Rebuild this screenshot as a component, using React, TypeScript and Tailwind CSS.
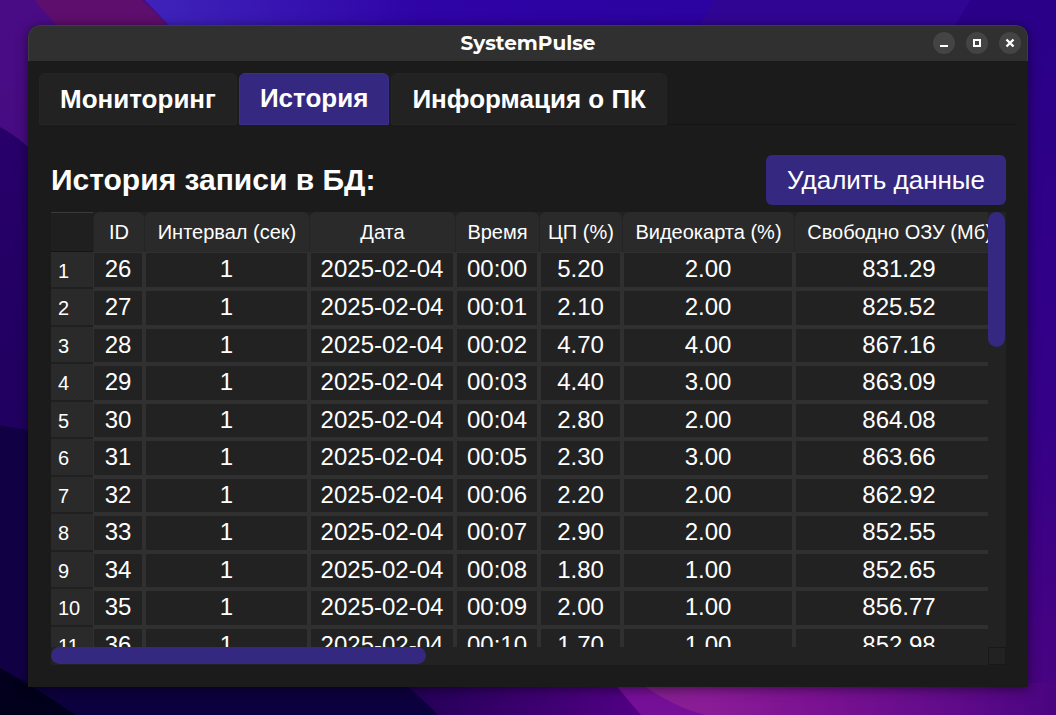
const columns = ["ID", "Интервал (сек)", "Дата", "Время", "ЦП (%)", "Видеокарта (%)", "Свободно ОЗУ (Мб)"];

const rows = [
  ["26", "1", "2025-02-04", "00:00", "5.20", "2.00", "831.29"],
  ["27", "1", "2025-02-04", "00:01", "2.10", "2.00", "825.52"],
  ["28", "1", "2025-02-04", "00:02", "4.70", "4.00", "867.16"],
  ["29", "1", "2025-02-04", "00:03", "4.40", "3.00", "863.09"],
  ["30", "1", "2025-02-04", "00:04", "2.80", "2.00", "864.08"],
  ["31", "1", "2025-02-04", "00:05", "2.30", "3.00", "863.66"],
  ["32", "1", "2025-02-04", "00:06", "2.20", "2.00", "862.92"],
  ["33", "1", "2025-02-04", "00:07", "2.90", "2.00", "852.55"],
  ["34", "1", "2025-02-04", "00:08", "1.80", "1.00", "852.65"],
  ["35", "1", "2025-02-04", "00:09", "2.00", "1.00", "856.77"],
  ["36", "1", "2025-02-04", "00:10", "1.70", "1.00", "852.98"],
];

function Wallpaper() {
  return (
    <svg className="absolute inset-0 size-full" viewBox="0 0 1056 715" preserveAspectRatio="none" aria-hidden="true">
      <defs>
        <linearGradient id="base" x1="0" y1="0" x2="1" y2="0">
          <stop offset="0" stopColor="#3f28c0" />
          <stop offset="0.17" stopColor="#3d20b8" />
          <stop offset="0.4" stopColor="#2f03a6" />
          <stop offset="0.65" stopColor="#2c02a0" />
        </linearGradient>
        <linearGradient id="left" x1="0" y1="0" x2="0" y2="1">
          <stop offset="0" stopColor="#4a0c86" />
          <stop offset="1" stopColor="#3f0a78" />
        </linearGradient>
        <linearGradient id="leftLow" x1="0" y1="0" x2="0" y2="1">
          <stop offset="0" stopColor="#28006a" />
          <stop offset="1" stopColor="#200060" />
        </linearGradient>
        <linearGradient id="bottom" gradientUnits="userSpaceOnUse" x1="400" y1="0" x2="640" y2="0">
          <stop offset="0" stopColor="#220055" />
          <stop offset="1" stopColor="#520085" />
        </linearGradient>
        <linearGradient id="petal" gradientUnits="userSpaceOnUse" x1="645" y1="0" x2="1056" y2="0">
          <stop offset="0" stopColor="#85208f" />
          <stop offset="0.15" stopColor="#8a1c97" />
          <stop offset="0.4" stopColor="#7c1292" />
          <stop offset="0.7" stopColor="#640c8c" />
          <stop offset="1" stopColor="#4a0480" />
        </linearGradient>
        <linearGradient id="right" x1="0" y1="0" x2="0" y2="1">
          <stop offset="0" stopColor="#2a0088" />
          <stop offset="0.6" stopColor="#350088" />
          <stop offset="1" stopColor="#4a0480" />
        </linearGradient>
      </defs>
      <rect width="1056" height="715" fill="url(#base)" />
      <path d="M714 0H1056V60H680Z" fill="#310594" />
      <path d="M970 0H1056V715H900V120Z" fill="url(#right)" />
      <path d="M0 0H145L230 90V400H0Z" fill="url(#left)" />
      <path d="M35 0H141Q155 11 168 27V50H90Q55 28 35 0Z" fill="#5e0e6c" />
      <path d="M0 127Q18 136 40 158V440H0Z" fill="url(#leftLow)" />
      <path d="M0 425Q20 430 40 431V715H0Z" fill="#120045" />
      <path d="M0 680H440V715H0Z" fill="#0d003e" />
      <path d="M0 668Q40 690 75 715H0Z" fill="#02001c" />
      <path d="M400 680H1000V715H438Q424 700 400 680Z" fill="url(#bottom)" />
      <path d="M614 683H1000V715H641Q628 700 614 683Z" fill="#760f98" />
      <path d="M640 683H1056V715H706Q675 708 640 683Z" fill="url(#petal)" />
    </svg>
  );
}

export default function App() {
  return (
    <div className="relative flex h-screen overflow-hidden bg-[#2a0088] px-7 pt-[25px] pb-7 font-['Liberation_Sans',Arial,sans-serif] text-white">
      <Wallpaper />
      <main className="relative flex min-w-0 flex-1 flex-col overflow-hidden rounded-t-xl bg-[#1b1b1b] shadow-[0_2px_12px_rgba(0,0,0,0.5)]">
        <header className="grid h-9 shrink-0 grid-cols-[1fr_auto_1fr] items-center rounded-t-xl border border-b-0 border-[#3d3d3d] bg-[#303030] px-1.5">
          <h1 className="col-start-2 pb-0.5 font-['Montserrat','Inter',sans-serif] text-xl leading-6 font-bold">SystemPulse</h1>
          <div className="flex justify-end gap-[11px] pb-px">
            <button aria-label="Свернуть" className="size-[22px] rounded-full bg-[#444444]">
              <svg viewBox="0 0 22 22" aria-hidden="true"><path d="M7 13h8v2H7z" fill="white" /></svg>
            </button>
            <button aria-label="Развернуть" className="size-[22px] rounded-full bg-[#444444]">
              <svg viewBox="0 0 22 22" aria-hidden="true"><path d="M8 8h6v6H8z" fill="none" stroke="white" strokeWidth="2" /></svg>
            </button>
            <button aria-label="Закрыть" className="size-[22px] rounded-full bg-[#444444]">
              <svg viewBox="0 0 22 22" aria-hidden="true"><path d="M7.5 7.5l7 7M14.5 7.5l-7 7" stroke="white" strokeWidth="2.4" /></svg>
            </button>
          </div>
        </header>

        <nav className="mx-[11px] mt-3 flex h-[52px] shrink-0 gap-0.5 border-b border-[#151515] text-[26px] leading-8 font-bold" role="tablist">
          <button role="tab" aria-selected="false" className="-mb-px rounded-t-md border border-[#252525] bg-[#222222] px-5">Мониторинг</button>
          <button role="tab" aria-selected="true" className="-mb-px rounded-t-md border border-[#3b2e88] bg-[#352880] px-5 pb-0.5">История</button>
          <button role="tab" aria-selected="false" className="-mb-px rounded-t-md border border-[#252525] bg-[#222222] px-5">Информация о ПК</button>
        </nav>

        <section className="flex min-h-0 flex-1 flex-col px-[22px] pt-[30px] pb-[22px] pl-[23px]">
          <div className="flex shrink-0 items-center justify-between">
            <h2 className="text-[30px] leading-9 font-bold">История записи в БД:</h2>
            <button className="h-[50px] rounded-md bg-[#352880] px-[21px] text-[26px] leading-8">Удалить данные</button>
          </div>

          <div className="mt-[7px] grid min-h-0 flex-1 grid-cols-[minmax(0,1fr)_18px] grid-rows-[minmax(0,1fr)_18px] bg-[#222222]">
            <div className="overflow-hidden">
              <table className="w-[953px] table-fixed border-separate border-spacing-0">
                <colgroup>
                  <col className="w-[42px]" />
                  <col className="w-[51px]" />
                  <col className="w-[165px]" />
                  <col className="w-[146px]" />
                  <col className="w-[84px]" />
                  <col className="w-[83px]" />
                  <col className="w-[172px]" />
                  <col className="w-[210px]" />
                </colgroup>
                <thead>
                  <tr className="h-10 bg-[#1b1b1b] text-xl leading-6">
                    <td className="border-t border-b border-t-[#3a3a3a] border-b-[#151515] bg-[#1f1f1f] p-0" />
                    {columns.map((name) => (
                      <th key={name} scope="col" className="rounded-t-md border-l border-[#242424] bg-[#2a2a2a] p-0 font-normal whitespace-nowrap">
                        {name}
                      </th>
                    ))}
                  </tr>
                </thead>
                <tbody>
                  {rows.map((row, index) => (
                    <tr key={row[0]} className="odd:h-[37px] even:h-[38px]">
                      <th scope="row" className="border-b-2 border-[#202020] bg-[#2a2a2a] p-0 pt-0.5 pl-[7px] text-left text-xl leading-6 font-normal">
                        {index + 1}
                      </th>
                      {row.map((value, cell) => (
                        <td
                          key={columns[cell]}
                          className={`border-r-2 border-b-2 border-[#303030] bg-[#222222] p-0 pb-0.5 text-center text-2xl leading-7 ${index === 0 ? "border-t" : "border-t-2"} ${cell === 0 ? "border-l" : "border-l-2"}`}
                        >
                          {value}
                        </td>
                      ))}
                    </tr>
                  ))}
                </tbody>
              </table>
            </div>
            <div>
              <div className="h-[135px] w-[17px] rounded-full bg-[#352880]" />
            </div>
            <div>
              <div className="h-[17px] w-2/5 rounded-full bg-[#352880]" />
            </div>
            <div className="border border-[#181818]" />
          </div>
        </section>
      </main>
    </div>
  );
}
